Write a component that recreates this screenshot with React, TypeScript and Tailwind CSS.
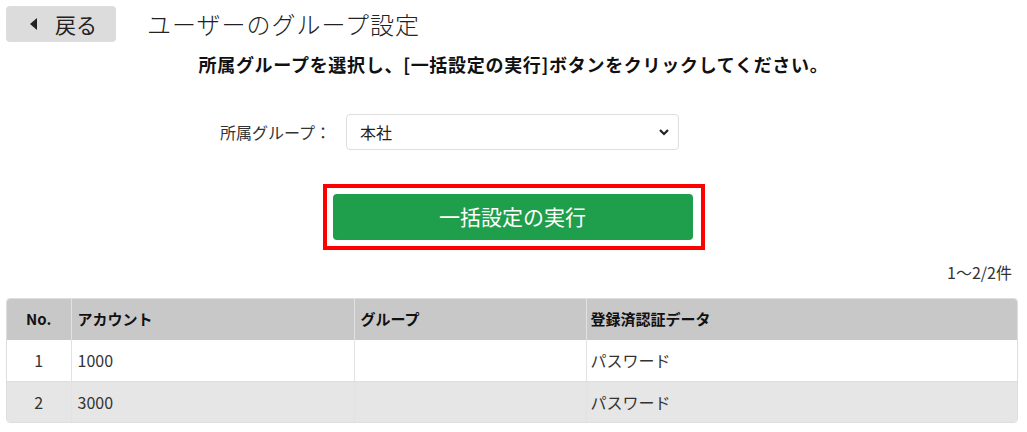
import React from "react";

const rows = [
    { no: 1, account: "1000", group: "", auth: "パスワード" },
    { no: 2, account: "3000", group: "", auth: "パスワード" },
];

export default function App() {
    return (
        <div
            className="w-[1027px] h-[432px] bg-white text-[#222] overflow-hidden"
            style={{ fontFamily: '"Noto Sans CJK JP", "Noto Sans", sans-serif' }}
        >
            {/* Header */}
            <div className="flex items-center pt-[6px] pl-[6px]">
                <button className="flex items-center w-[110px] h-[36px] rounded-[4px] bg-[#dcdcdc] pl-[24px] gap-[17px] text-[21px] leading-none text-[#222]">
                    <svg width="8" height="12" viewBox="0 0 8 12">
                        <path d="M7 0 L0 6 L7 12 Z" fill="#222" />
                    </svg>
                    <span>戻る</span>
                </button>
                <h1 className="ml-[31px] text-[24px] tracking-[1px] leading-none font-light text-[#222]">ユーザーのグループ設定</h1>
            </div>

            {/* Instruction */}
            <p className="mt-[10px] text-center text-[18px] tracking-[0.7px] font-bold leading-[24px] text-[#111]">
                所属グループを選択し、[一括設定の実行]ボタンをクリックしてください。
            </p>

            {/* Group select */}
            <div className="flex items-center mt-[38px] pl-[220px]">
                <label className="w-[126px] text-[16px] text-[#333]">所属グループ：</label>
                <div className="relative w-[333px] h-[36px]">
                    <select className="appearance-none w-full h-full rounded-[4px] border border-[#dedede] bg-white pl-[13px] text-[16px] text-[#222] outline-none">
                        <option>本社</option>
                    </select>
                    <svg className="absolute right-[10px] top-[15px] pointer-events-none" width="10" height="7" viewBox="0 0 10 7">
                        <path d="M1 1 L5 5 L9 1" fill="none" stroke="#222" strokeWidth="2.2" />
                    </svg>
                </div>
            </div>

            {/* Execute */}
            <div className="flex justify-center mt-[34px]">
                <div className="border-[4px] border-[#ff0000] p-[6px] pr-[8px]">
                    <button className="w-[360px] h-[46px] rounded-[4px] bg-[#1f9f4b] text-white text-[21px] font-normal">
                        一括設定の実行
                    </button>
                </div>
            </div>

            {/* Count */}
            <div className="flex justify-end pr-[15px] mt-[10px] text-[16px] leading-[24px] text-[#333]">1～2/2件</div>

            {/* Table */}
            <div className="mx-[6px] mt-[14px] w-[1012px] rounded-[4px] overflow-hidden border border-[#dedede]">
                <table className="w-full border-collapse text-[16px]">
                    <thead>
                        <tr className="bg-[#c8c8c8] h-[41px]">
                            <th className="w-[64px] text-center font-bold text-[15px] text-[#111]">No.</th>
                            <th className="w-[283px] text-left pl-[6px] font-bold text-[15px] text-[#111] border-l border-[#e2e2e2]">アカウント</th>
                            <th className="w-[232px] text-left pl-[6px] font-bold text-[15px] text-[#111] border-l border-[#e2e2e2]">グループ</th>
                            <th className="text-left pl-[4px] font-bold text-[15px] text-[#111] border-l border-[#e2e2e2]">登録済認証データ</th>
                        </tr>
                    </thead>
                    <tbody>
                        {rows.map((r, i) => (
                            <tr key={r.no} className={i % 2 === 1 ? "bg-[#e6e6e6] h-[41px]" : "bg-white h-[41px] border-b border-[#dedede]"}>
                                <td className="text-center text-[#333]">{r.no}</td>
                                <td className="pl-[6px] text-[#333] border-l border-[#e2e2e2]">{r.account}</td>
                                <td className="pl-[6px] text-[#333] border-l border-[#e2e2e2]">{r.group}</td>
                                <td className="pl-[4px] text-[#333] border-l border-[#e2e2e2]">{r.auth}</td>
                            </tr>
                        ))}
                    </tbody>
                </table>
            </div>
        </div>
    );
}
